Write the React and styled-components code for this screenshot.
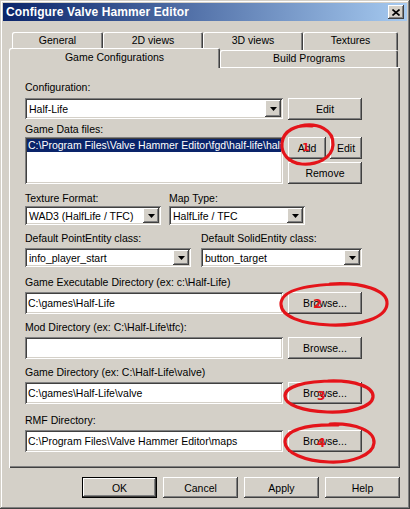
import React from "react";
import styled, { createGlobalStyle } from "styled-components";

const GlobalStyle = createGlobalStyle`
  html, body {
    margin: 0;
    padding: 0;
    background: #d4d0c8;
  }
  * {
    box-sizing: border-box;
  }
`;

const raised = `
  box-shadow: inset -1px -1px #404040, inset 1px 1px #ffffff,
    inset -2px -2px #808080, inset 2px 2px #d4d0c8;
`;

const sunken = `
  box-shadow: inset 1px 1px #808080, inset -1px -1px #ffffff,
    inset 2px 2px #404040, inset -2px -2px #d4d0c8;
`;

const Window = styled.div`
  position: relative;
  width: 410px;
  height: 509px;
  padding: 3px;
  background: #d4d0c8;
  box-shadow: inset -1px -1px #404040, inset 1px 1px #d4d0c8,
    inset -2px -2px #808080, inset 2px 2px #ffffff;
  font-family: "Liberation Sans", Arial, sans-serif;
  font-size: 10.5px;
  color: #000;
`;

const TitleBar = styled.div`
  height: 18px;
  display: flex;
  align-items: center;
  justify-content: space-between;
  padding: 0 3px 0 3px;
  background: linear-gradient(to right, #0a246a, #a6caf0);
`;

const Title = styled.span`
  color: #fff;
  font-weight: bold;
  font-size: 12px;
  letter-spacing: 0.1px;
`;

const CloseButton = styled.div`
  width: 16px;
  height: 14px;
  background: #d4d0c8;
  display: flex;
  align-items: center;
  justify-content: center;
  ${raised}
`;

const TabArea = styled.div`
  margin-top: 11px;
`;

const TabRow = styled.div`
  display: flex;
  align-items: flex-end;
  height: ${(p) => p.$h}px;
  padding-left: ${(p) => p.$pad}px;
  margin-top: ${(p) => p.$mt || 0}px;
`;

const Tab = styled.div`
  position: relative;
  z-index: ${(p) => (p.$active ? 2 : 1)};
  width: ${(p) => p.$w}px;
  height: ${(p) => p.$h}px;
  margin-bottom: ${(p) => (p.$active ? -1 : 0)}px;
  background: #d4d0c8;
  border-radius: 2px 2px 0 0;
  display: flex;
  justify-content: center;
  padding-top: ${(p) => (p.$active ? 3 : 2)}px;
  white-space: nowrap;
  box-shadow: inset 1px 1px #ffffff, inset -1px 0 #404040, inset -2px 0 #808080;
`;

const Panel = styled.div`
  position: relative;
  z-index: 1;
  margin-left: 6px;
  width: 391px;
  height: 401px;
  padding-left: 16px;
  background: #d4d0c8;
  box-shadow: inset 1px 1px #ffffff, inset -1px -1px #404040,
    inset -2px -2px #808080;
`;

const Label = styled.div`
  height: 13px;
  line-height: 13px;
  width: ${(p) => (p.$w ? `${p.$w}px` : "auto")};
  flex: none;
  white-space: nowrap;
  padding-top: ${(p) => p.$mt || 0}px;
  box-sizing: content-box;
`;

const Row = styled.div`
  display: flex;
  align-items: flex-start;
  margin-top: ${(p) => p.$mt || 0}px;
`;

const Field = styled.div`
  width: ${(p) => p.$w}px;
  height: ${(p) => p.$h || 22}px;
  background: #fff;
  padding: 0 3px;
  display: flex;
  align-items: center;
  white-space: nowrap;
  overflow: hidden;
  ${sunken}
`;

const Combo = styled.div`
  width: ${(p) => p.$w}px;
  height: ${(p) => p.$h || 20}px;
  margin-left: ${(p) => p.$ml || 0}px;
  background: #fff;
  padding: 2px;
  display: flex;
  ${sunken}
`;

const ComboText = styled.div`
  flex: 1;
  display: flex;
  align-items: center;
  padding-left: 2px;
  white-space: nowrap;
  overflow: hidden;
`;

const DropButton = styled.div`
  width: 16px;
  background: #d4d0c8;
  display: flex;
  align-items: center;
  justify-content: center;
  ${raised}
`;

const Button = styled.div`
  width: ${(p) => p.$w || 74}px;
  height: ${(p) => p.$h || 22}px;
  margin-left: ${(p) => p.$ml || 0}px;
  margin-top: ${(p) => p.$mt || 0}px;
  background: #d4d0c8;
  display: flex;
  align-items: center;
  justify-content: center;
  white-space: nowrap;
  ${(p) =>
    p.$default
      ? `box-shadow: inset 0 0 0 1px #000000, inset -2px -2px #404040, inset 2px 2px #ffffff,
          inset -3px -3px #808080, inset 3px 3px #d4d0c8;`
      : raised}
`;

const ListBox = styled.div`
  width: 258px;
  height: 47px;
  background: #fff;
  padding: 2px;
  overflow: hidden;
  ${sunken}
`;

const ListItem = styled.div`
  height: 13px;
  line-height: 13px;
  padding-left: 1px;
  white-space: nowrap;
  overflow: hidden;
  background: ${(p) => (p.$selected ? "#0a246a" : "transparent")};
  color: ${(p) => (p.$selected ? "#fff" : "#000")};
`;

const SideButtons = styled.div`
  display: flex;
  flex-direction: column;
  margin-left: 5px;
`;

const ButtonBar = styled.div`
  display: flex;
  justify-content: flex-end;
  gap: 6px;
  margin-top: 9px;
  padding-right: 7px;
`;

const Marks = styled.svg`
  position: absolute;
  z-index: 10;
  left: 0;
  top: 0;
  pointer-events: none;
`;

const Arrow = () => (
  <svg width="7" height="4" viewBox="0 0 7 4">
    <polygon points="0,0 7,0 3.5,4" fill="#000" />
  </svg>
);

const DropCombo = ({ w, h, ml, children }) => (
  <Combo $w={w} $h={h} $ml={ml}>
    <ComboText>{children}</ComboText>
    <DropButton>
      <Arrow />
    </DropButton>
  </Combo>
);

const DirRow = ({ value }) => (
  <Row $mt={3}>
    <Field $w={258}>{value}</Field>
    <Button $ml={5}>Browse...</Button>
  </Row>
);

const RED = "#e4141a";

export default function App() {
  return (
    <>
      <GlobalStyle />
      <Window>
        <TitleBar>
          <Title>Configure Valve Hammer Editor</Title>
          <CloseButton>
            <svg width="8" height="7" viewBox="0 0 8 7">
              <path d="M0.5 0.5 L7.5 6.5 M7.5 0.5 L0.5 6.5" stroke="#000" strokeWidth="1.6" />
            </svg>
          </CloseButton>
        </TitleBar>

        <TabArea>
          <TabRow $h={18} $pad={9}>
            <Tab $w={91} $h={18}>General</Tab>
            <Tab $w={100} $h={18}>2D views</Tab>
            <Tab $w={100} $h={18}>3D views</Tab>
            <Tab $w={95} $h={18}>Textures</Tab>
          </TabRow>
          <TabRow $h={19} $pad={6} $mt={-2}>
            <Tab $w={211} $h={20} $active>Game Configurations</Tab>
            <Tab $w={178} $h={17}>Build Programs</Tab>
          </TabRow>
        </TabArea>

        <Panel>
          <Label $mt={14}>Configuration:</Label>
          <Row $mt={4}>
            <DropCombo w={258} h={21}>Half-Life</DropCombo>
            <Button $ml={5}>Edit</Button>
          </Row>

          <Label $mt={3}>Game Data files:</Label>
          <Row $mt={1}>
            <ListBox>
              <ListItem $selected>
                C:\Program Files\Valve Hammer Editor\fgd\half-life\halflife-cs.fgd
              </ListItem>
            </ListBox>
            <SideButtons>
              <Row>
                <Button $w={38}>Add</Button>
                <Button $w={32} $ml={4}>Edit</Button>
              </Row>
              <Button $mt={3}>Remove</Button>
            </SideButtons>
          </Row>

          <Row $mt={8}>
            <Label $w={144}>Texture Format:</Label>
            <Label>Map Type:</Label>
          </Row>
          <Row $mt={1}>
            <DropCombo w={136} h={19}>WAD3 (HalfLife / TFC)</DropCombo>
            <DropCombo w={136} h={19} ml={8}>HalfLife / TFC</DropCombo>
          </Row>

          <Row $mt={7}>
            <Label $w={176}>Default PointEntity class:</Label>
            <Label>Default SolidEntity class:</Label>
          </Row>
          <Row $mt={3}>
            <DropCombo w={166} h={19}>info_player_start</DropCombo>
            <DropCombo w={161} h={19} ml={10}>button_target</DropCombo>
          </Row>

          <Label $mt={9}>Game Executable Directory (ex: c:\Half-Life)</Label>
          <DirRow value="C:\games\Half-Life" />

          <Label $mt={7}>Mod Directory (ex: C:\Half-Life\tfc):</Label>
          <DirRow value="" />

          <Label $mt={7}>Game Directory (ex: C:\Half-Life\valve)</Label>
          <DirRow value="C:\games\Half-Life\valve" />

          <Label $mt={10}>RMF Directory:</Label>
          <DirRow value="C:\Program Files\Valve Hammer Editor\maps" />
        </Panel>

        <ButtonBar>
          <Button $w={75} $h={21} $default>OK</Button>
          <Button $w={75} $h={21}>Cancel</Button>
          <Button $w={75} $h={21}>Apply</Button>
          <Button $w={75} $h={21}>Help</Button>
        </ButtonBar>

        <Marks width="410" height="509" viewBox="0 0 410 509">
          <g fill="none" stroke={RED} strokeWidth="3.2" strokeLinecap="round">
            <path d="M300 126 C318 122 334 130 333 145 C332 159 316 165 302 164 C288 163 281 153 282 143 C283 131 296 124 312 126" />
            <path d="M330 284 C362 282 388 290 387 304 C386 318 360 326 330 325 C300 324 281 316 281 304 C281 292 300 285 340 284" />
            <path d="M328 381 C355 380 374 387 373 397 C372 407 350 413 327 412 C303 411 285 405 285 396 C285 387 302 381 336 381" />
            <path d="M330 424 C356 423 375 431 374 443 C373 455 352 463 329 462 C305 461 285 453 285 442 C285 431 304 424 338 425" />
          </g>
          <g fill={RED} fontFamily="'DejaVu Sans', sans-serif" fontWeight="bold">
            <text x="302" y="151" fontSize="11">1</text>
            <text x="313" y="308" fontSize="13">2</text>
            <text x="317" y="400" fontSize="12">3</text>
            <text x="317" y="447" fontSize="12">4</text>
          </g>
        </Marks>
      </Window>
    </>
  );
}
